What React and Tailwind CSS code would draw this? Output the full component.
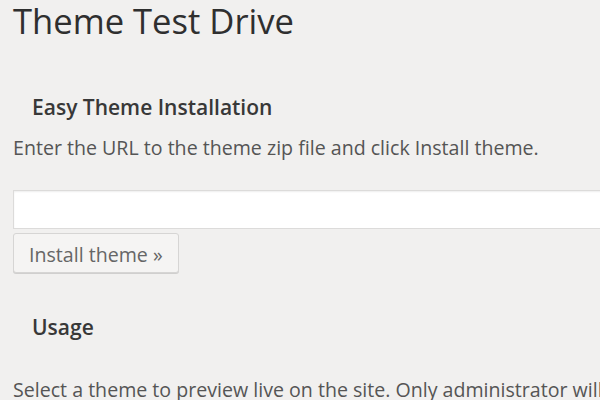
export default function App() {
  return (
    <div className="w-[600px] h-[400px] overflow-hidden bg-[#f1f0ef] pl-[13px]" style={{ fontFamily: '"Open Sans", sans-serif' }}>
      <h1 className="-mt-[3px] text-[34.6px] leading-[48px] text-[#2f2f2f] font-normal whitespace-nowrap">Theme Test Drive</h1>
      <h3 className="mt-[48px] pl-[19px] text-[21px] leading-[28px] font-semibold text-[#383838] whitespace-nowrap">Easy Theme Installation</h3>
      <p className="mt-[13px] text-[19.6px] leading-[27px] text-[#555555] whitespace-nowrap">Enter the URL to the theme zip file and click Install theme.</p>
      <div className="mt-[29px] h-[39px] w-[600px] bg-white border border-[#dcdbda] shadow-[inset_0_1px_2px_rgba(0,0,0,0.07)]"></div>
      <button className="mt-[4px] h-[40px] w-[166px] flex items-start pt-[7px] pl-[15px] bg-[#f5f4f3] border border-[#d6d5d4] rounded-[3px] shadow-[0_1px_0_#d0cfce] text-[19.6px] leading-[27px] text-[#666666] whitespace-nowrap">Install theme »</button>
      <h3 className="mt-[40px] pl-[19px] text-[21px] leading-[28px] font-semibold text-[#383838] whitespace-nowrap">Usage</h3>
      <p className="mt-[35px] text-[19.6px] leading-[27px] text-[#555555] whitespace-nowrap">Select a theme to preview live on the site. Only administrator will see the preview.</p>
    </div>
  );
}
